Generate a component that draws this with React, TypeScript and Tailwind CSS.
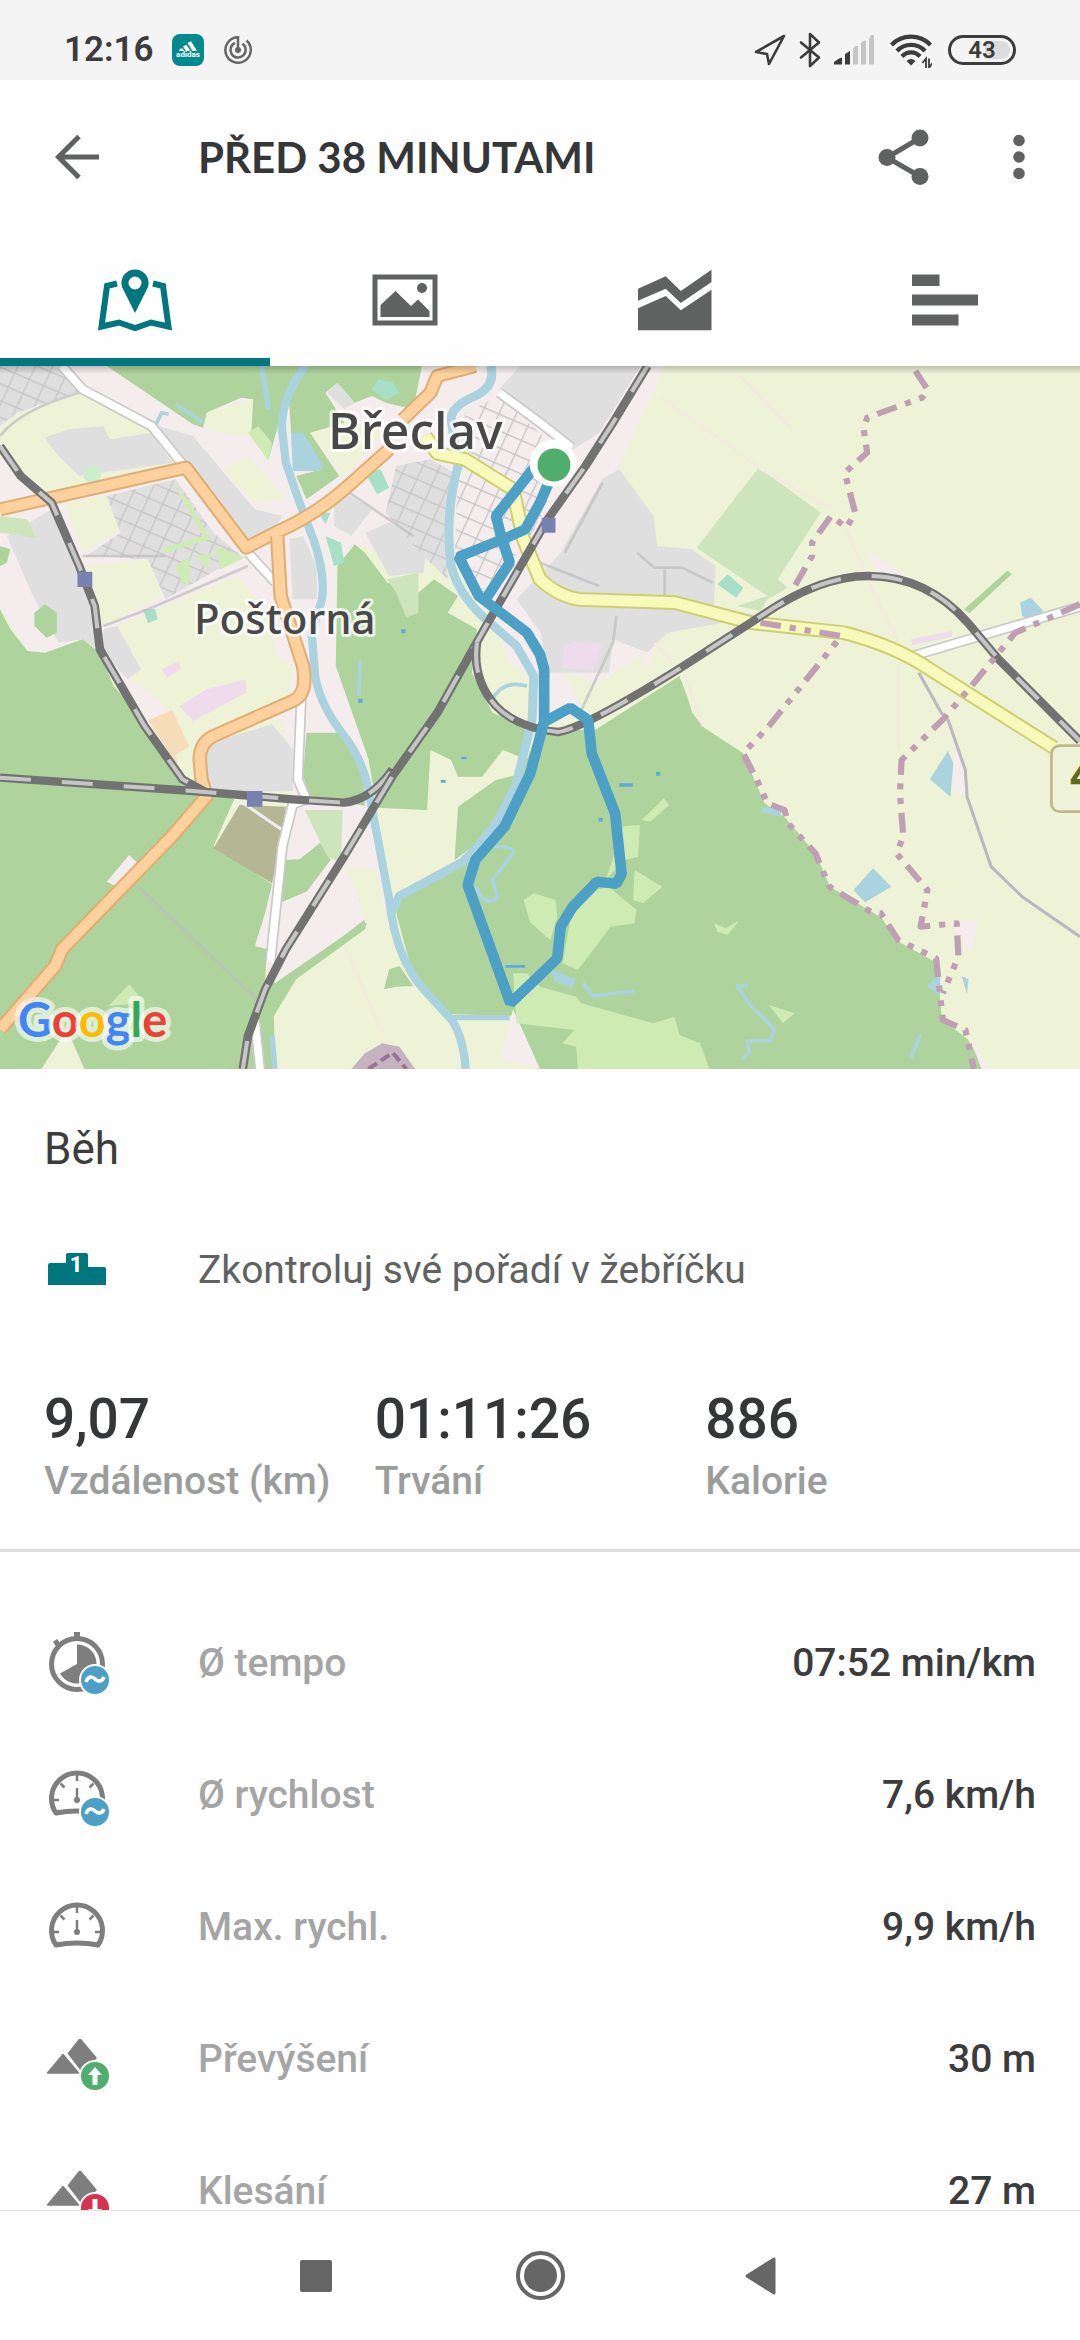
import React, { useState } from 'react';

const HEADLINE = [
  { value: '9,07', label: 'Vzdálenost (km)' },
  { value: '01:11:26', label: 'Trvání' },
  { value: '886', label: 'Kalorie' },
];

function StatusBar() {
  return (
    <div className="flex h-20 shrink-0 items-center justify-between bg-[#f4f4f4] pt-5 pr-16 pl-16 text-[#3c3c3c]">
      <div className="flex items-center">
        <span className="w-[108px] text-[35px] leading-10 font-semibold">12:16</span>
        <svg className="size-8" viewBox="0 0 32 32" aria-hidden="true">
          <rect width="32" height="32" rx="8" fill="#028a8f" />
          <path fill="#fff" d="M15.500 9L19 7.200 25 17H20.500zM11 12.500L14.500 10.700 18.500 17H14zM7 16L10 14 12.500 17H7.500z" />
          <text x="16" y="23" textAnchor="middle" fontSize="8" fontWeight="700" fill="#fff">adidas</text>
        </svg>
        <svg className="ml-5 size-7" viewBox="0 0 28 28" fill="none" stroke="#666" strokeWidth="2.500" aria-hidden="true">
          <path d="M14 14V1.300A12.700 12.700 0 1 0 22.500 4.500" />
          <path d="M11 7A7.600 7.600 0 1 0 18.500 7.800" />
          <circle cx="14" cy="14" r="3" fill="#666" stroke="none" />
        </svg>
      </div>
      <div className="flex items-center">
        <svg className="h-8 w-8" viewBox="0 0 32 32" fill="none" stroke="#3c3c3c" strokeWidth="2.600" strokeLinejoin="round" aria-hidden="true">
          <path d="M2 18L30 2 15 30 13 20z" />
        </svg>
        <svg className="ml-3 h-9 w-6" viewBox="0 0 24 36" fill="none" stroke="#3c3c3c" strokeWidth="2.600" strokeLinejoin="round" strokeLinecap="round" aria-hidden="true">
          <path d="M3 10.500L21 25.500 12 34V2L21 10.500 3 25.500" />
        </svg>
        <svg className="ml-3 h-8 w-10" viewBox="0 0 40 32" aria-hidden="true">
          <path fill="#3c3c3c" d="M0 30.500V28L5 24.500 8 23.500V30.500zM11 30.500V20L16 17V30.500z" />
          <path fill="#c5c5c5" d="M19 30.500V15L21 12H24V30.500zM27 30.500V9L30 6.500H32V30.500zM35 30.500V5L37 1H40V30.500z" />
        </svg>
        <svg className="ml-4 h-9 w-[42px]" viewBox="0 0 42 36" aria-hidden="true">
          <g fill="none" stroke="#3c3c3c" strokeWidth="4.200">
            <path d="M1.500 13A27 27 0 0 1 40.500 13" />
            <path d="M7 19A19 19 0 0 1 35 19" />
            <path d="M12 24.500A12 12 0 0 1 30 24.500" />
          </g>
          <path fill="#3c3c3c" d="M16.500 29q4.500-4 9 0l-4.500 4.500z" />
          <path fill="none" stroke="#3c3c3c" strokeWidth="1.800" d="M36 36V26.500L32.500 31M39 26.500V36L42 31.500" />
        </svg>
        <div className="ml-4 h-[30px] w-[68px] rounded-full border-3 border-[#3c3c3c] p-[3px]">
          <div className="flex h-full items-center justify-center rounded-full bg-linear-to-r from-transparent from-55% to-[#dcdcdc] to-55% text-[24px] leading-6 font-semibold">
            43
          </div>
        </div>
      </div>
    </div>
  );
}

function Header() {
  return (
    <header className="flex h-[154px] shrink-0 items-center px-11 text-[#606261]">
      <button type="button" aria-label="Zpět" className="mr-[88px]">
        <svg className="size-[66px]" viewBox="0 0 66 66" fill="none" stroke="currentColor" strokeWidth="5" aria-hidden="true">
          <path d="M35 12.500L14.500 33 35 53.500M15 33H55" />
        </svg>
      </button>
      <h1 className="flex-1 font-[Lato,sans-serif] text-[42px] leading-[56px] font-bold text-[#353638]">PŘED 38 MINUTAMI</h1>
      <button type="button" aria-label="Sdílet">
        <svg className="size-[66px]" viewBox="0 0 66 66" aria-hidden="true">
          <path d="M50 14L17 33.500 50 52.500" fill="none" stroke="currentColor" strokeWidth="5" />
          <circle cx="50" cy="14" r="8.500" fill="currentColor" />
          <circle cx="17" cy="33.500" r="8.500" fill="currentColor" />
          <circle cx="50" cy="52.500" r="8.500" fill="currentColor" />
        </svg>
      </button>
      <button type="button" aria-label="Další možnosti" className="ml-[66px]">
        <svg className="h-[66px] w-[34px]" viewBox="0 0 34 66" fill="currentColor" aria-hidden="true">
          <circle cx="17" cy="16.500" r="5.800" />
          <circle cx="17" cy="33" r="5.800" />
          <circle cx="17" cy="49.500" r="5.800" />
        </svg>
      </button>
    </header>
  );
}

const TABS = [
  {
    id: 'map',
    label: 'Mapa',
    icon: (
      <>
        <path d="M22 16.500L12 19 6.500 59.500 24 55.500 40 61 56 55.500 73.500 59.500 68 19 58 16.500" fill="none" stroke="currentColor" strokeWidth="6" />
        <path fill="currentColor" fillRule="evenodd" d="M40 46L29 24A13.600 13.600 0 1 1 51 24zM40 9.500a6.500 6.500 0 1 0 0 13 6.500 6.500 0 1 0 0-13z" />
      </>
    ),
  },
  {
    id: 'photos',
    label: 'Fotky',
    icon: (
      <>
        <rect x="10" y="10" width="60" height="46" fill="none" stroke="currentColor" strokeWidth="5" />
        <path fill="currentColor" d="M15.500 50V38L30.500 24 46 39 53 32.500 64.500 44V50z" />
        <circle cx="57" cy="21" r="5" fill="currentColor" />
      </>
    ),
  },
  {
    id: 'charts',
    label: 'Grafy',
    icon: (
      <path fill="currentColor" d="M3 21.700L30.700 9.300 45.800 24 76.500 2.700V15L45.800 36 30.700 21.700 3 33.700zM3 41.300L30.700 29 45.800 43.300 76.500 22.700V63.300H3z" />
    ),
  },
  {
    id: 'splits',
    label: 'Mezičasy',
    icon: <path fill="currentColor" d="M7 7.500H34.500V19H7zM7 27.500H73V38.500H7zM7 47.500H53.500V58.500H7z" />,
  },
];

function Tabs() {
  const [active, setActive] = useState('map');

  return (
    <nav className="grid h-[132px] shrink-0 grid-cols-4">
      {TABS.map((tab) => (
        <button
          key={tab.id}
          type="button"
          aria-label={tab.label}
          onClick={() => setActive(tab.id)}
          className={`flex items-center justify-center border-y-8 border-t-transparent ${
            active === tab.id ? 'border-b-[#00767f] text-[#00767f]' : 'border-b-transparent text-[#606261]'
          }`}
        >
          <svg className="h-[66px] w-20" viewBox="0 0 80 66" aria-hidden="true">{tab.icon}</svg>
        </button>
      ))}
    </nav>
  );
}

const ORANGE_ROADS = [
  'M0 430L540 305 715 545 800 500Q910 450 1000 370L1130 250M1170 160L1250 80 1270 30 1380 0',
  'M805 510L815 690 880 900Q895 985 850 1005L620 1110Q580 1130 580 1180L585 1240 600 1290 500 1410 180 1750 160 1800 0 1990',
];
const YELLOW_ROADS = 'M1235 210L1270 262 1350 280 1490 370 1520 520 1568 640Q1620 690 1680 700L1960 710 2180 770 2450 800Q2600 840 2700 910L3060 1145';
const WHITE_ROADS = 'M180 0L240 70 440 180 530 295M722 562L800 650M1450 80L1568 170 1660 245M875 990L865 1240 890 1300 850 1315 820 1440 785 1790M740 1960L755 2109M2650 870L3136 722';
const RAILS = [
  'M0 240L60 330 150 410 230 600 275 720 290 850 420 1080 530 1240 600 1280',
  'M0 1235L560 1275 850 1300 1000 1310Q1080 1300 1140 1210',
  'M1880 0L1780 170 1700 300 1590 460 1400 800 1270 1040 1140 1230 1000 1470 830 1750 770 1870 720 2010 705 2109',
  'M1385 830Q1370 940 1440 1020 1500 1085 1620 1098 1690 1090 1970 910L2210 750Q2380 630 2520 630 2690 630 2810 770L2900 880 3136 1125',
];
const RIVERS = [
  'M885 0Q810 110 820 200L830 290 870 410 910 520Q945 620 935 700L905 800 915 930Q930 1020 1000 1110 1060 1190 1075 1300L1130 1600Q1150 1780 1230 1870L1310 1960Q1345 2010 1352 2109',
  'M1425 0Q1440 60 1380 90 1310 120 1310 160L1330 300Q1290 450 1310 600 1330 680 1400 750L1500 840 1550 930 1545 1060 1500 1250Q1440 1400 1340 1490L1160 1590 1135 1640',
  'M1310 1955H1480M760 0L780 130M790 2010L798 2109',
];
const BORDERS = [
  'M2658 15L2693 70 2678 95 2518 155 2508 190 2518 260 2453 320 2483 440 2458 485 2413 450 2358 530 2358 570 2308 660',
  'M2208 770L2443 810 2233 1080 2158 1162 2198 1242 2228 1312 2278 1332 2288 1372 2368 1462 2408 1562 2528 1637 2558 1642 2608 1722 2718 1777 2738 1962 2803 1992 2828 2109',
  'M3136 715L2948 800 2868 900 2813 970 2738 1060 2618 1182 2613 1282 2623 1412 2603 1462 2693 1572 2673 1682 2778 1672 2783 1772 2738 1882',
];
const ROUTE = 'M1555 300L1440 450 1455 510 1480 590 1410 700M1593 350L1568 410 1525 490 1460 520 1332 572 1390 690 1530 800 1568 865 1580 910 1580 1065 1540 1222 1465 1382 1380 1482 1358 1557 1482 1912 1568 1827 1618 1777 1628 1682 1663 1622 1733 1547 1790 1554 1805 1524 1786 1342 1718 1162 1708 1062 1656 1025 1585 1065';

function MapLand() {
  return (
    <>
      <rect width="3136" height="2109" fill="#eef2d7" />
      {/* Built-up ground */}
      <path fill="#f5eded" d="M0 0H1930L1795 310 1640 580 1910 790 1880 930 1700 1040 1560 1080 1400 700 1310 560 1030 540 975 600 975 900 1060 1150 1140 1600 1060 1680 1000 1722 800 1860 740 1730 770 1640 850 1300 820 1060 430 1080 290 860 80 860 0 720z" />
      <path fill="#eef2d7" d="M0 190L30 150 230 80 440 190 500 290 140 385 60 340 0 240zM190 410L310 390 350 490 240 560zM250 600L430 580 470 690 300 780zM340 780L690 630 790 760 800 870 850 900 840 990 550 1150 470 1010 380 940 410 900zM600 140L740 95 750 190 700 210 600 190zM650 310L720 270 830 400 740 410zM900 200L980 150 1110 200 1000 330zM1330 690L1400 760 1380 800 1300 740zM1410 830L1530 930 1550 1050 1450 1000 1390 920zM1640 920L1740 950 1860 870 1890 930 1700 1050z" />
      {/* Residential */}
      <g fill="#dfdfdf">
        <path d="M0 0H170L230 75 50 140 0 180zM130 215L200 190 300 180 320 220 440 200 500 290 230 330 170 270zM460 180L560 210 740 430 820 450 790 500 720 540 540 290zM310 390L510 340 620 500 700 570 480 700 430 580 250 570 350 500zM20 510L150 430 230 620 280 700 285 850 240 820 170 830 100 700zM300 790L340 780 410 910 370 940 300 860zM840 520L880 510 920 600 920 700 850 700zM970 400L1000 380 1080 430 1020 510 970 480zM1060 500L1130 470 1240 520 1230 620 1130 630zM1150 300L1250 280 1320 320 1290 500 1300 640 1220 560 1120 440zM950 80L980 50 1030 110 1000 130z" />
        <path d="M610 1130L790 1075 850 1150 850 1275 620 1280 590 1210zM1510 0H1860L1740 200 1650 260 1450 70zM1798 310L1898 450 1908 540 2008 550 2078 600 2073 720 2208 750 1938 800 1880 860 1780 820 1768 920 1590 920 1570 800 1500 700 1628 560 1748 340z" />
        <path d="M80 1482L140 1472 150 1442 340 1372 510 1362 410 1467 240 1457 165 1502z" />
      </g>
      <g fill="url(#streets)">
        <path d="M0 0H170L230 75 50 140 0 180zM310 390L510 340 620 500 700 570 480 700 430 580 250 570 350 500zM1150 300L1250 280 1320 320 1290 500 1300 640 1220 560 1120 440z" />
        <path d="M1330 300L1350 140 1450 90 1640 270 1560 480 1400 700 1320 580z" />
      </g>
      {/* Forest */}
      <g fill="#aed39c">
        <path d="M310 0H880L850 100 810 170 780 280 730 200 735 100 700 95 600 140 590 185 560 175zM890 0H1225L1200 130 1120 110 1080 90 1030 110 980 50 945 80 1000 170 900 200 985 330 890 400 860 330 935 310 845 200 840 110z" />
        <path d="M0 730L30 790 80 855 130 860 240 820 290 860 330 960 430 1080 530 1240 590 1270 680 1300 620 1440 790 1555 770 1640 740 1740 775 1750 770 1840 800 1850 990 1715 1060 1660 1040 1590 1070 1650 1060 1690 860 1840 795 1950 800 2109H0z" />
        <path d="M1030 535L980 600 975 900 1070 1180 1095 1325 1240 1332 1250 1152 1310 1182 1330 1232 1400 1232 1460 1152 1510 1172 1540 1092 1430 1040 1370 920 1385 790 1300 740 1330 690 1260 640 1215 680 1125 650 1060 560zM1330 1322L1440 1242 1500 1227 1490 1292 1440 1392 1320 1482z" />
        <path d="M890 1100L990 1100 1050 1180 1060 1320 900 1290 880 1230zM830 1482L870 1480 930 1430 960 1482 890 1577 810 1612z" />
        <path d="M1728 1092L1973 930 1998 1000 2010 1040 2040 1082 2158 1162 2190 1240 2220 1312 2280 1355 2370 1465 2410 1562 2560 1655 2600 1722 2720 1790 2735 1960 2810 2020 2860 2109H1560L1500 1950 1310 1945 1200 1830 1150 1640 1170 1590 1330 1500 1440 1400 1520 1200 1570 1090z" />
        <path d="M0 540L30 550 20 590 0 600zM100 740L130 715 165 740 165 800 135 815 100 780zM1115 1870L1130 1810 1160 1800 1200 1860 1150 1862zM2800 730L2925 614 2938 624 2815 742z" />
      </g>
      <path fill="#eef2d7" d="M120 2109L195 1990 245 2109zM1320 1972H1500L1450 2072 1350 2040zM1000 1502L1090 1512 1120 1652 1060 1672 1040 1590z" />
      <path fill="#f5eded" d="M310 1547L375 1467 400 1492 340 1562zM1490 1930L1568 2109 1450 2080zM2510 550L2650 640 2560 640zM2760 1670L2840 1660 2820 1760zM2770 1140L2808 1240 2800 1290 2765 1270zM2810 2000L2870 2109 2850 2109z" />
      <path fill="#cde4bd" d="M2203 305L2383 440 2258 640 2288 665 2228 700 2208 735 2140 720 2228 690 2023 545zM0 450L80 460 105 515 0 500zM1125 640L1215 620 1215 740 1180 755 1150 680zM885 1332H995L990 1492 950 1470z" />
      {/* Meadows and clearings */}
      <path fill="#cdebb2" d="M315 1920L375 1855 420 1910zM1490 1822H1530L1568 1862 1673 1892 1688 1912 1898 1972 1958 1952 1973 2007 2033 2032 2060 2109H1678L1673 2042 1633 2032 1668 1992 1500 1972zM1810 1380L1858 1377 1853 1472 1813 1482 1760 1540zM1678 1812L1773 1682 1843 1672 1848 1632 1768 1562 1733 1572 1658 1652 1633 1792zM1863 1362L1928 1297 1943 1317 1888 1367zM1843 1512L1923 1562 1868 1612 1838 1602zM2073 1672L2108 1687 2148 1662 2113 1707 2083 1697zM2233 1917L2308 1942 2273 1972zM1520 1602L1550 1582 1613 1602 1618 1652 1598 1722 1540 1670zM720 200L750 180 790 230 780 285zM500 350L545 400 600 500 610 520 480 560 475 545 590 510 540 420zM510 600L550 570 550 650 530 655zM570 570L615 560 600 610zM625 540L710 575 640 610z" />
      <path fill="#a8dfc8" d="M1080 70L1100 40 1140 50 1160 80 1120 103zM1060 320L1105 310 1130 365 1095 385zM945 510L990 530 1000 590 970 600zM925 440L960 440 945 475zM2113 625L2158 665 2138 695 2083 655zM415 730L450 728 458 760 430 772z" />
      <circle cx="268" cy="325" r="26" fill="#caf0cb" />
      <path fill="#f7dcb9" d="M430 1062L500 1032 550 1142 510 1167 518 1202z" />
      <path fill="#eedcec" d="M520 1020L600 970 715 940 715 980 560 1065zM470 910L520 885 525 910 485 935zM1638 840L1668 825 1750 835 1720 915 1630 905zM2645 820L2765 795 2765 812 2648 838z" />
      <path fill="#b5b693" d="M695 1317L830 1322 820 1402 790 1552 620 1447z" />
      <path fill="#c5b3c0" d="M1020 2109L1060 2062 1110 2032 1160 2042 1205 2109z" />
      <path fill="none" stroke="#9b7398" strokeWidth="12" strokeDasharray="30 14" d="M1070 2109L1140 2060 1180 2109" />
      <path fill="none" stroke="#eee" strokeWidth="9" d="M690 1300L820 1392" />
      {/* Ponds */}
      <path fill="#aad3df" d="M845 200H880L940 300 930 315H850zM2962 710L2993 695 3030 735 2993 765 2968 750zM2700 1240L2752 1155 2768 1190 2760 1292zM2478 1572L2535 1507 2588 1562 2512 1609zM2210 1322L2270 1332 2265 1352 2215 1340zM2690 1860L2730 1822V1890zM1600 1810L1670 1840 1660 1865 1610 1845zM2792 1830L2812 1840 2808 1885z" />
      <path fill="#62aadd" d="M1798 1252H1838V1262H1798zM1905 1217H1917V1229H1905zM1738 1355H1750V1367H1738zM1165 790H1178V802H1165zM1040 998H1053V1010H1040zM1280 1242H1294V1250H1280zM1468 1797H1525V1805H1468zM1340 1172H1355V1180H1340z" />
    </>
  );
}

function MapLines() {
  return (
    <g fill="none" strokeLinejoin="round">
      <path stroke="#bdbdbd" strokeWidth="8" d="M400 1560L745 1900M0 210Q60 130 230 80M1000 370L1200 510M300 780L430 730 720 600M1790 750L1780 830 1680 1050M1568 590L1740 660M1850 560L1900 605 1980 605M1930 610V690M1980 605L2070 650M1640 560L1750 350M240 570H480" strokeOpacity=".7" />
      <path stroke="#f3ebe0" strokeWidth="7" d="M1920 95L2200 300M2200 305L2420 430M2458 490L2518 640 2610 830 2610 1150M1000 1740L1110 2000M2040 1080L1990 930 1900 830M2140 20L2300 190" />
      <path stroke="#aad3df" strokeWidth="24" d={RIVERS[0]} />
      <path stroke="#aad3df" strokeWidth="26" d={RIVERS[1]} />
      <path stroke="#aad3df" strokeWidth="16" d={RIVERS[2]} />
      <path stroke="#aad3df" strokeWidth="11" d="M1430 1442Q1500 1440 1490 1462L1430 1542 1445 1597Q1410 1625 1380 1562M2173 1860H2140L2180 1920 2250 1990 2235 2025H2170L2175 2060 2155 2080M1693 1850L1720 1890 1843 1875M1430 1000Q1460 940 1530 960M1046 880L1042 990M2673 2005L2645 2075M450 180L470 140 490 145M510 115L590 170" />
      <path stroke="#bcb8c0" strokeWidth="9" d="M2668 920L2733 1040 2753 1062 2803 1212 2808 1292 2878 1502 2968 1592 3136 1712" />
      <path stroke="#c9c9c9" strokeWidth="32" d={WHITE_ROADS} />
      <path stroke="#fff" strokeWidth="22" d={WHITE_ROADS} />
      <path stroke="#cfcf72" strokeWidth="44" d={YELLOW_ROADS} />
      <path stroke="#f7fabb" strokeWidth="32" d={YELLOW_ROADS} />
      {ORANGE_ROADS.map((d) => (
        <React.Fragment key={d}>
          <path stroke="#dfae72" strokeWidth="42" d={d} />
          <path stroke="#fdd19e" strokeWidth="30" d={d} />
        </React.Fragment>
      ))}
      {RAILS.map((d) => (
        <React.Fragment key={d}>
          <path stroke="#727272" strokeWidth="25" d={d} />
          <path stroke="#c6c6c6" strokeWidth="12" strokeDasharray="90 90" d={d} />
        </React.Fragment>
      ))}
      {BORDERS.map((d) => (
        <path key={d} stroke="#bf9fb4" strokeWidth="18" strokeDasharray="60 26 18 26 18 26" d={d} />
      ))}
    </g>
  );
}

function RouteMap() {
  return (
    <div className="relative shrink-0">
      <svg className="block w-full font-['Noto_Sans',sans-serif]" viewBox="0 0 1080 703" role="img" aria-label="Trasa běhu">
        <defs>
          <pattern id="streets" width="46" height="46" patternUnits="userSpaceOnUse" patternTransform="rotate(24)">
            <path d="M0 0H46M0 0V46" stroke="#c9c6c6" strokeWidth="8" />
          </pattern>
        </defs>
        {/* Land and lines share a finer grid than the labels */}
        <g transform="scale(.34439 .33333)">
          <MapLand />
          <MapLines />
          <path fill="#7a80b0" d="M225 617H268V663H225zM717 1275H762V1322H717zM1573 455H1613V500H1573z" />
          <rect x="3053" y="1139" width="200" height="198" rx="24" fill="#eef2d7" stroke="#bfb98a" strokeWidth="8" />
        </g>
        <g fill="#484848" fontWeight="500" stroke="#fff" strokeOpacity=".75" strokeWidth="6" strokeLinejoin="round" paintOrder="stroke">
          <text x="328" y="83" fontSize="50">Břeclav</text>
          <text x="194" y="268" fontSize="42">Poštorná</text>
        </g>
        <text x="1070" y="425" fontSize="44" fontWeight="700" fill="#5f6b1f">4</text>
        <g transform="scale(.34439 .33333)">
          <path d={ROUTE} fill="none" stroke="#4c9fc5" strokeWidth="31" strokeLinejoin="bevel" />
        </g>
        <circle cx="553" cy="97" r="23.500" fill="#fff" />
        <circle cx="554" cy="99" r="16.500" fill="#4fad6e" />
        <text
          x="18"
          y="671"
          fontSize="47"
          fontFamily="Lato, sans-serif"
          fontWeight="700"
          stroke="#fff"
          strokeOpacity=".6"
          strokeWidth="10"
          strokeLinejoin="round"
          paintOrder="stroke"
        >
          <tspan fill="#4285f4">G</tspan>
          <tspan fill="#ea4335">o</tspan>
          <tspan fill="#fbbc05">o</tspan>
          <tspan fill="#4285f4">g</tspan>
          <tspan fill="#34a853">l</tspan>
          <tspan fill="#ea4335">e</tspan>
        </text>
      </svg>
      <div className="absolute inset-x-0 top-0 h-2 bg-linear-to-b from-black/20 to-transparent" />
    </div>
  );
}

function AverageBadge() {
  return (
    <>
      <circle cx="51" cy="50" r="16" fill="#fff" />
      <circle cx="51" cy="50" r="14" fill="#4c9fc5" />
      <path d="M42 52C44 46 48 46 51 49S58 52 60 47" fill="none" stroke="#fff" strokeWidth="3.600" />
    </>
  );
}

function Stopwatch() {
  return (
    <>
      <circle cx="33" cy="34" r="25.500" fill="none" stroke="#7e7e7e" strokeWidth="5" />
      <path fill="#7e7e7e" d="M30 2H36V9H30zM9 12L13 9 17 14 13 18zM33 34V14.500A19.500 19.500 0 1 1 16 43.500z" />
    </>
  );
}

function Speedometer() {
  return (
    <g fill="none" stroke="#7e7e7e">
      <path strokeWidth="5" strokeLinejoin="round" d="M12 51A25.500 25.500 0 1 1 54 51Q33 47 12 51z" />
      <path strokeWidth="2.500" d="M33 13V19M9 38H15M51 38H57M16.500 21.500L20.500 25.500M49.500 21.500L45.500 25.500M33 26V37" />
      <circle cx="33" cy="38" r="3" fill="#7e7e7e" stroke="none" />
    </g>
  );
}

function Mountains() {
  return <path fill="#7e7e7e" stroke="#7e7e7e" strokeWidth="1.500" strokeLinejoin="round" d="M3.500 47L19 28.500 34.500 47zM24.500 27.500L35 14Q36 13 37 14L52 32 38 45z" />;
}

function ArrowBadge({ down = false }: { down?: boolean }) {
  return (
    <>
      <circle cx="51" cy="50" r="16" fill="#fff" />
      <circle cx="51" cy="50" r="14" fill={down ? '#d5334f' : '#4fad6e'} />
      <path fill="#fff" d={down ? 'M51 59L44 51H48.500V41H53.500V51H58z' : 'M51 41L44 49H48.500V59H53.500V49H58z'} />
    </>
  );
}

const METRICS = [
  { label: 'Ø tempo', value: '07:52 min/km', icon: <><Stopwatch /><AverageBadge /></> },
  { label: 'Ø rychlost', value: '7,6 km/h', icon: <><Speedometer /><AverageBadge /></> },
  { label: 'Max. rychl.', value: '9,9 km/h', icon: <Speedometer /> },
  { label: 'Převýšení', value: '30 m', icon: <><Mountains /><ArrowBadge /></> },
  { label: 'Klesání', value: '27 m', icon: <><Mountains /><ArrowBadge down /></> },
];

function Summary() {
  return (
    <section className="shrink-0 border-b-3 border-[#dedede] px-11 pt-[54px] pb-[38px]">
      <h2 className="text-[44px] leading-[52px] text-[#3c3c3c]">Běh</h2>
      <a href="#zebricek" className="mt-[62px] flex items-center gap-[88px] text-[39px] leading-[52px] text-[#606261]">
        <svg className="size-[66px] shrink-0" viewBox="0 0 66 66" aria-hidden="true">
          <path fill="#00767f" d="M4 48V28q0-2 2-2H22V18q0-2 2-2H42q2 0 2 2V30H60q2 0 2 2V48z" />
          <text x="32" y="35" textAnchor="middle" fontSize="22" fontWeight="800" fill="#fff">1</text>
        </svg>
        Zkontroluj své pořadí v žebříčku
      </a>
      <dl className="mt-[84px] grid grid-cols-3">
        {HEADLINE.map((item) => (
          <div key={item.label} className="flex flex-col-reverse font-medium whitespace-nowrap">
            <dt className="text-[39px] leading-[60px] text-[#9b9d9c]">{item.label}</dt>
            <dd className="text-[55px] leading-16 text-[#353638]">{item.value}</dd>
          </div>
        ))}
      </dl>
    </section>
  );
}

function Metrics() {
  return (
    <ul className="px-11 pt-[45px] text-[39px] font-medium">
      {METRICS.map((metric) => (
        <li key={metric.label} className="flex h-[132px] items-center">
          <svg className="mr-[88px] size-[66px]" viewBox="0 0 66 66" aria-hidden="true">{metric.icon}</svg>
          <span className="flex-1 text-[#a5a5a5]">{metric.label}</span>
          <span className="text-[#3c3c3c]">{metric.value}</span>
        </li>
      ))}
    </ul>
  );
}

function SystemNav() {
  return (
    <nav className="flex h-[130px] shrink-0 items-center justify-center border-t border-[#e2e2e2] bg-white text-[#666]">
      <button type="button" aria-label="Poslední aplikace" className="flex w-56 justify-center">
        <span className="size-8 rounded-xs bg-current" />
      </button>
      <button type="button" aria-label="Domů" className="flex w-56 justify-center">
        <span className="size-[49px] rounded-full border-4 border-current p-1">
          <span className="block size-full rounded-full bg-current" />
        </span>
      </button>
      <button type="button" aria-label="Zpět v systému" className="flex w-56 justify-center">
        <svg className="h-10 w-10" viewBox="0 0 40 40" fill="currentColor" stroke="currentColor" strokeWidth="3" strokeLinejoin="round" aria-hidden="true">
          <path d="M3 20L30 3V37z" />
        </svg>
      </button>
    </nav>
  );
}

export default function App() {
  return (
    <div className="flex h-screen flex-col bg-[#fefefe] font-[Roboto,sans-serif]">
      <StatusBar />
      <Header />
      <Tabs />
      <main className="flex min-h-0 flex-1 flex-col overflow-hidden">
        <RouteMap />
        <Summary />
        <Metrics />
      </main>
      <SystemNav />
    </div>
  );
}
